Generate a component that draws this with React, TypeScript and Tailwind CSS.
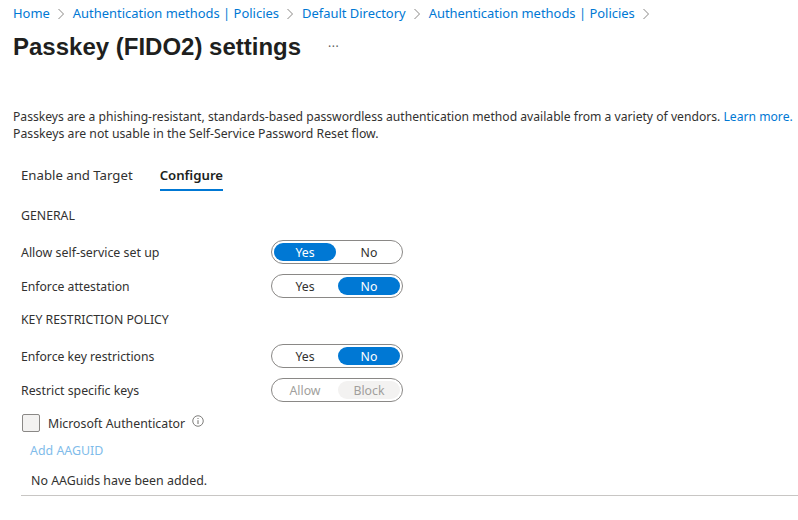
import React from "react";

function Chevron() {
  return (
    <svg width="8" height="12" viewBox="0 0 8 12" fill="none" className="shrink-0">
      <path d="M1.5 1 L6.5 6 L1.5 11" stroke="#8a8886" strokeWidth="1" />
    </svg>
  );
}

function Toggle({ left, right, active, disabled }: { left: string; right: string; active: "l" | "r"; disabled?: boolean }) {
  const on = disabled ? "bg-[#f3f2f1] text-[#a19f9d]" : "bg-[#0078d4] text-white";
  const off = disabled ? "text-[#a19f9d]" : "text-[#323130]";
  return (
    <div className="flex h-6 w-[132px] items-center gap-0.5 rounded-full border border-[#8a8886] bg-white px-[2px]">
      <div className={`flex h-[18px] flex-1 items-center justify-center rounded-full ${active === "l" ? on : off}`}>{left}</div>
      <div className={`flex h-[18px] flex-1 items-center justify-center rounded-full ${active === "r" ? on : off}`}>{right}</div>
    </div>
  );
}

function Row({ label, className, labelClass, children }: { label: string; className: string; labelClass: string; children: React.ReactNode }) {
  return (
    <div className={`flex h-6 items-center pl-[21px] ${className}`}>
      <div className={`w-[250px] ${labelClass}`}>{label}</div>
      {children}
    </div>
  );
}

export default function App() {
  return (
    <div className="h-[520px] w-[798px] overflow-hidden bg-white font-['Noto_Sans','Open_Sans',sans-serif] text-[12.3px] leading-[17px] text-[#323130]">
      <nav className="flex h-[27px] items-center gap-[7.5px] pl-[13px] text-[12.95px] text-[#0078d4]">
        <span>Home</span>
        <Chevron />
        <span>Authentication methods | Policies</span>
        <Chevron />
        <span>Default Directory</span>
        <Chevron />
        <span>Authentication methods | Policies</span>
        <Chevron />
      </nav>
      <div className="flex h-10 items-center pl-[13px]">
        <h1 className="font-['Liberation_Sans',sans-serif] text-2xl leading-8 font-bold text-[#201f1e]">Passkey (FIDO2) settings</h1>
        <span className="ml-[27px] text-xs tracking-[0.5px] text-[#605e5c]">···</span>
      </div>
      <p className="mt-[41px] pl-[13px] text-[12.15px]">
        Passkeys are a phishing-resistant, standards-based passwordless authentication method available from a variety of vendors. <span className="text-[#0078d4]">Learn more.</span>
        <br />
        <span className="text-[12.25px]">Passkeys are not usable in the Self-Service Password Reset flow.</span>
      </p>
      <div className="mt-[23px] flex pl-[21px] text-[13.2px]">
        <div className="h-[26px] pt-[2px]">Enable and Target</div>
        <div className="ml-[27px] h-[26px] border-b-2 border-[#0078d4] pt-[2px] font-semibold text-[#201f1e]">Configure</div>
      </div>
      <div className="mt-[16px] pl-[21px]">GENERAL</div>
      <Row label="Allow self-service set up" labelClass="text-[12.4px]" className="mt-[16px]"><Toggle left="Yes" right="No" active="l" /></Row>
      <Row label="Enforce attestation" labelClass="text-[12.2px]" className="mt-[10px]"><Toggle left="Yes" right="No" active="r" /></Row>
      <div className="mt-[13px] pl-[21px]">KEY RESTRICTION POLICY</div>
      <Row label="Enforce key restrictions" labelClass="text-[12.2px]" className="mt-[16px]"><Toggle left="Yes" right="No" active="r" /></Row>
      <Row label="Restrict specific keys" labelClass="text-[12.3px]" className="mt-[10px]"><Toggle left="Allow" right="Block" active="r" disabled /></Row>
      <div className="mt-[12px] flex h-[18px] items-center pl-[22px]">
        <div className="h-[18px] w-[18px] rounded-[2px] border border-[#8a8886] bg-[#f3f2f1]" />
        <span className="ml-[8px]">Microsoft Authenticator</span>
        <svg width="12" height="12" viewBox="0 0 12 12" fill="none" className="mb-[4px] ml-[7px]">
          <circle cx="6" cy="6" r="5.25" stroke="#605e5c" strokeWidth="0.8" />
          <path d="M6 5.2V9M6 3V4" stroke="#605e5c" strokeWidth="0.9" />
        </svg>
      </div>
      <div className="mt-[10px] pl-[30px] text-[12.4px] text-[#7fbcea]">Add AAGUID</div>
      <div className="mt-[13px] pl-[31px] text-[12.4px]">No AAGuids have been added.</div>
      <div className="mt-[6px] ml-[21px] border-b border-[#c8c6c4]" />
    </div>
  );
}
